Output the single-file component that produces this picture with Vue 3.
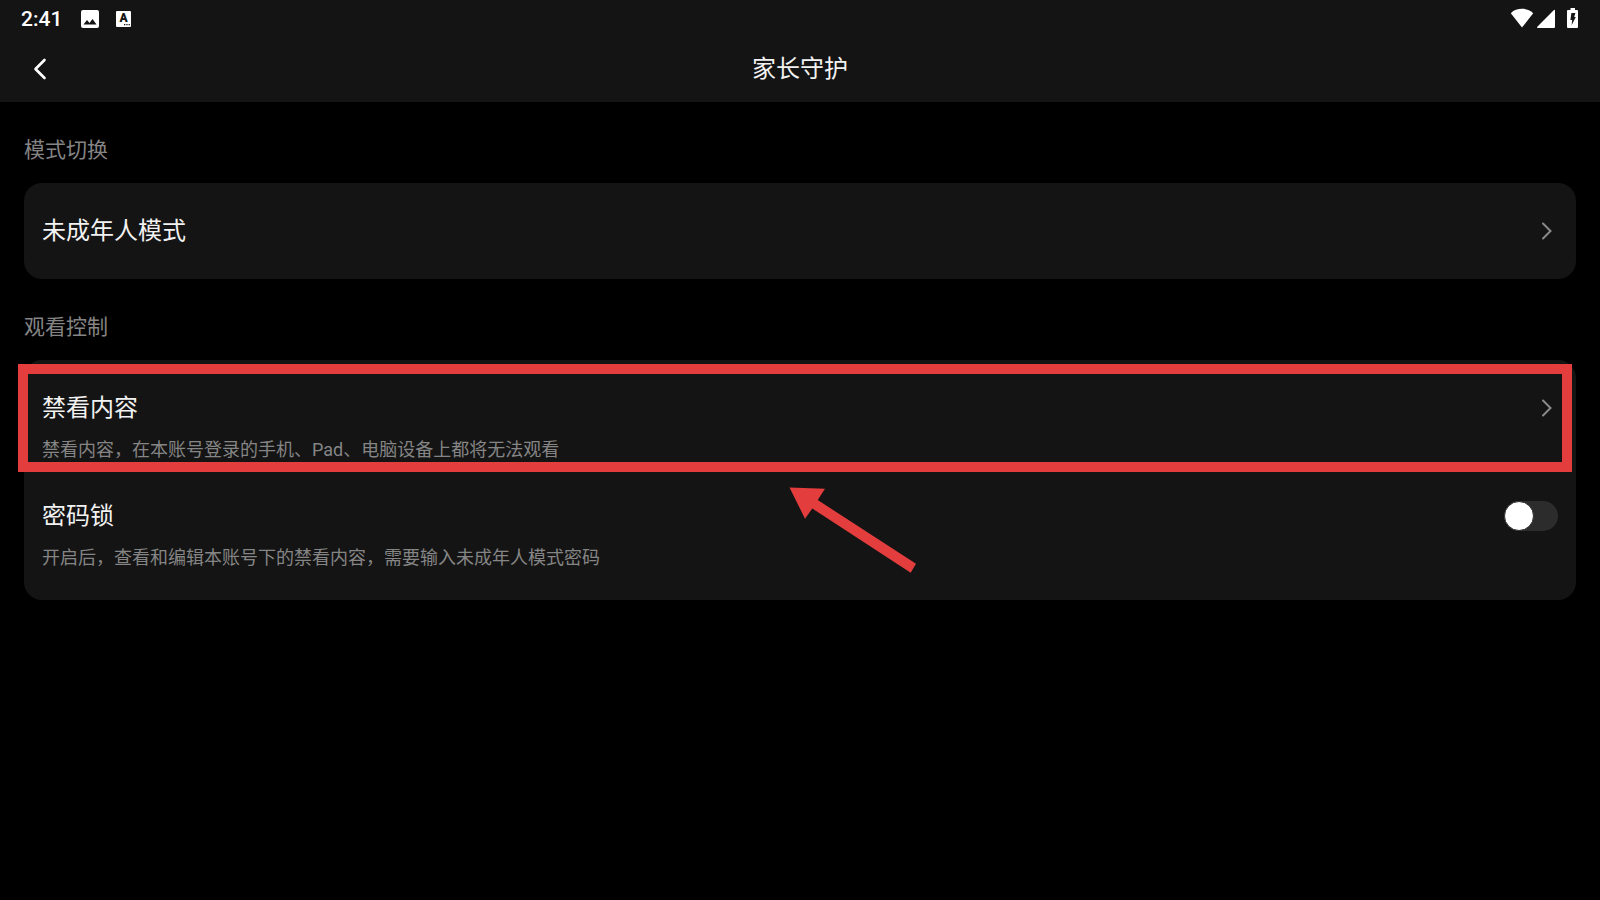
<template>
  <div class="page">
    <header class="top">
      <div class="status-bar">
        <div class="status-left">
          <time class="clock">2:41</time>
          <svg width="18" height="18" viewBox="0 0 18 18" aria-hidden="true">
            <rect width="18" height="18" rx="2" fill="#fff" />
            <path d="M2.500 14.500 6 10l2.500 3L11.500 9l4 5.500z" fill="#141414" />
          </svg>
          <svg class="icon-lang" width="16" height="16" viewBox="0 0 16 16" aria-hidden="true">
            <rect width="15" height="16" rx="1" fill="#fff" />
            <text x="7.500" y="11" text-anchor="middle">A</text>
            <path d="M8 13h1.300v1.300H8zM10.300 13h1.300v1.300h-1.300zM12.600 13h1.300v1.300h-1.300z" fill="#141414" />
          </svg>
        </div>
        <div class="status-right">
          <svg width="24" height="20" viewBox="0 0 24 20" aria-hidden="true">
            <path d="M12 19.500 .8 5.200C3.800 2 7.800.8 12 .8s8.200 1.200 11.200 4.400z" fill="#fff" />
          </svg>
          <svg width="20" height="20" viewBox="0 0 20 20" aria-hidden="true">
            <path d="M19 2v17a1 1 0 0 1-1 1H1.500q-.8-.4-.2-1.200L17.700 2.300Q18.600 1.400 19 2z" fill="#fff" />
          </svg>
          <svg class="icon-battery" width="12" height="20" viewBox="0 0 12 20" aria-hidden="true">
            <path d="M3.500 0h4.500v2h2a1 1 0 0 1 1 1v16a1 1 0 0 1-1 1H1a1 1 0 0 1-1-1V3a1 1 0 0 1 1-1h2.500z" fill="#fff" />
            <path d="M4.400 5h4L7.200 9h1.600L4.600 17.300 5.200 12H3.400z" fill="#141414" />
          </svg>
        </div>
      </div>
      <nav class="nav">
        <button class="back" type="button" aria-label="返回">
          <svg width="32" height="32" viewBox="0 0 32 32">
            <path d="M20.500 7 11.500 16l9 9" fill="none" stroke="#fff" stroke-width="2.600" stroke-linecap="round" stroke-linejoin="round" />
          </svg>
        </button>
        <h1>家长守护</h1>
      </nav>
    </header>

    <main>
      <section v-for="group in groups" :key="group.label">
        <h2>{{ group.label }}</h2>
        <div class="card">
          <div v-for="item in group.items" :key="item.title" class="item">
            <label v-if="item.toggle" class="row">
              <span class="row-head">
                <span>{{ item.title }}</span>
                <input v-model="locked" type="checkbox" class="switch" />
              </span>
              <span class="desc">{{ item.desc }}</span>
            </label>
            <button v-else type="button" class="row">
              <span class="row-head">
                <span>{{ item.title }}</span>
                <svg width="24" height="24" viewBox="0 0 24 24" aria-hidden="true">
                  <path d="M9 4.500 16.500 12 9 19.500" fill="none" stroke="#8a8a8a" stroke-width="2" stroke-linecap="round" />
                </svg>
              </span>
              <span v-if="item.desc" class="desc">{{ item.desc }}</span>
            </button>
            <template v-if="item.highlight">
              <div class="highlight"></div>
              <svg class="arrow" width="132" height="90" viewBox="0 0 132 90" aria-hidden="true">
                <path d="M1.500 1.500 37 2.700 29.700 14 128 77.700 122.700 86.700 24.300 22.400 17 32.700z" fill="#e43d3d" />
              </svg>
            </template>
          </div>
        </div>
      </section>
    </main>
  </div>
</template>

<script setup>
import { ref } from 'vue';

const locked = ref(false);

const groups = [
  {
    label: '模式切换',
    items: [{ title: '未成年人模式' }]
  },
  {
    label: '观看控制',
    items: [
      {
        title: '禁看内容',
        desc: '禁看内容，在本账号登录的手机、Pad、电脑设备上都将无法观看',
        highlight: true
      },
      {
        title: '密码锁',
        desc: '开启后，查看和编辑本账号下的禁看内容，需要输入未成年人模式密码',
        toggle: true
      }
    ]
  }
];
</script>

<style>
body {
  background: #000;
}
</style>

<style scoped>
.page {
  min-height: 100vh;
  background: #000;
  color: #f2f2f2;
  font-family: Roboto, "Noto Sans CJK SC", sans-serif;
}

.top {
  background: #141414;
}

.status-bar {
  height: 36px;
  padding: 0 21px;
  display: flex;
  justify-content: space-between;
  align-items: center;
}

.status-left,
.status-right {
  display: flex;
  align-items: center;
}

.status-left { gap: 17px; padding-top: 1px; }
.status-right { gap: 2px; }

.clock {
  margin-right: 2px;
  color: #fff;
  font-size: 21px;
  font-weight: 500;
  line-height: 36px;
}

.icon-lang text {
  font: 900 12px Roboto, sans-serif;
  fill: #141414;
}

.icon-battery { margin-left: 9px; }

.nav {
  display: grid;
  grid-template-columns: 1fr auto 1fr;
  align-items: center;
  height: 66px;
  padding: 0 24px;
}

.back {
  justify-self: start;
  display: flex;
  padding: 0;
  border: none;
  background: none;
  cursor: pointer;
}

h1 {
  margin: 0;
  font-size: 24px;
  font-weight: 400;
  line-height: 36px;
}

main {
  padding: 0 24px;
}

h2 {
  margin: 0;
  padding: 33px 0 18px;
  color: #858585;
  font-size: 21px;
  font-weight: 400;
  line-height: 30px;
}

.card {
  padding-bottom: 24px;
  border-radius: 18px;
  background: #141414;
}

.item {
  position: relative;
}

.row {
  display: flex;
  flex-direction: column;
  gap: 12px;
  box-sizing: border-box;
  width: 100%;
  padding: 30px 18px 6px;
  border: none;
  background: none;
  color: inherit;
  font-family: inherit;
  text-align: left;
  cursor: pointer;
}

.row-head {
  display: flex;
  justify-content: space-between;
  align-items: center;
  width: 100%;
  font-size: 24px;
  line-height: 36px;
}

.desc {
  color: #858585;
  font-size: 18px;
  line-height: 24px;
}

.switch {
  appearance: none;
  width: 54px;
  height: 30px;
  margin: 0;
  border-radius: 15px;
  background: #2c2c2c;
  cursor: pointer;
}

.switch::before {
  content: "";
  display: block;
  width: 30px;
  height: 30px;
  box-sizing: border-box;
  border: 1px solid #2c2c2c;
  border-radius: 50%;
  background: #fff;
}

.switch:checked { background: #e43d3d; }
.switch:checked::before { margin-left: 24px; }

.highlight {
  position: absolute;
  z-index: 1;
  top: 4px;
  right: 4px;
  bottom: -4px;
  left: -6px;
  border: 10px solid #e43d3d;
  pointer-events: none;
}

.arrow {
  position: absolute;
  z-index: 1;
  top: 126px;
  left: 50%;
  margin-left: -12px;
  pointer-events: none;
}
</style>
